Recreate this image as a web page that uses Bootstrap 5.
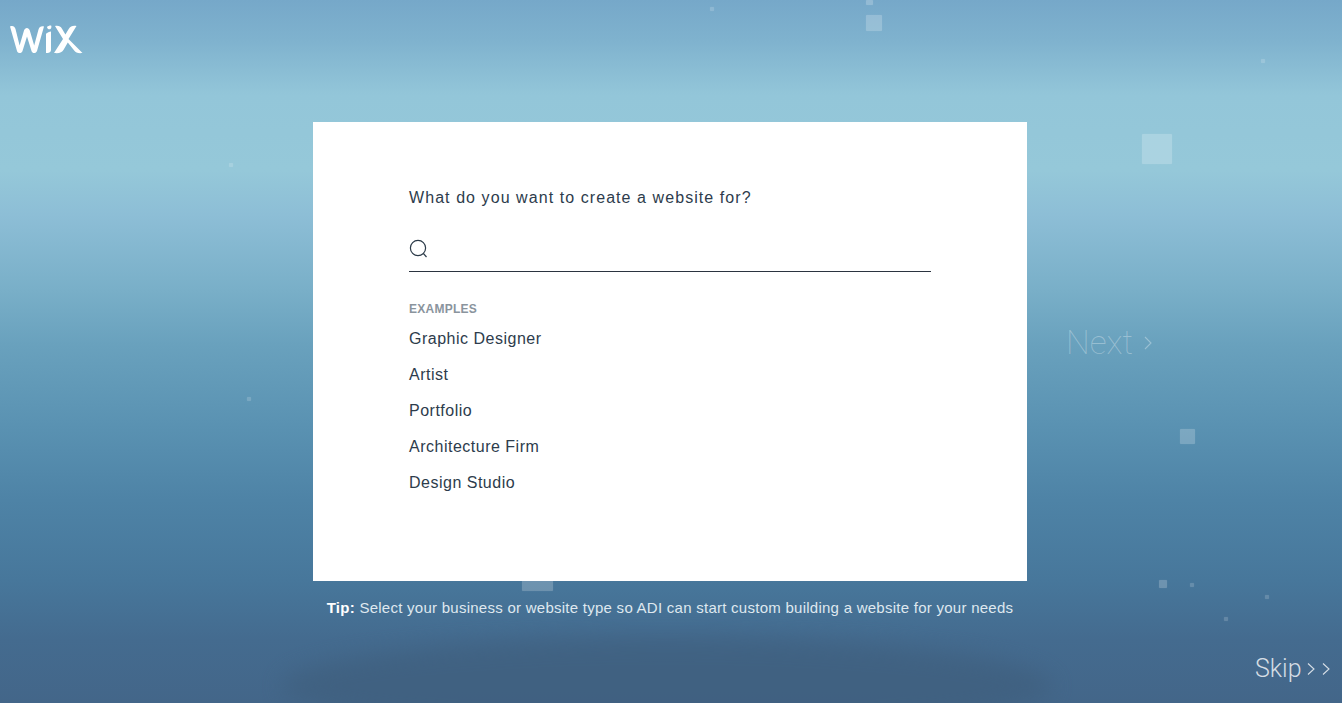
<!DOCTYPE html>
<html lang="en">
<head>
<meta charset="utf-8">
<title>ADI</title>
<link href="https://cdn.jsdelivr.net/npm/bootstrap@5.3.0/dist/css/bootstrap.min.css" rel="stylesheet">
<style>
html,body{height:100%}
body{margin:0;overflow:hidden;font-family:"Liberation Sans",Arial,sans-serif;background:linear-gradient(180deg,#76a8c9 0,#7fb2ce 40px,#93c6d9 95px,#95c8d9 170px,#8dbed6 215px,#79afc8 290px,#69a1bd 345px,#5a92b2 425px,#4e83a6 500px,#47779b 580px,#446b8f 640px,#436689 703px)}
.stage{position:relative;height:703px;overflow:hidden}
.glow{position:absolute;left:282px;top:638px;width:770px;height:96px;border-radius:50%;background:#3f5f7e;filter:blur(11px);opacity:.72}
.speck{position:absolute;background:rgba(255,255,255,.21);box-shadow:0 0 1px rgba(255,255,255,.2);border-radius:1px}
.speck.tiny{background:rgba(255,255,255,.17)}
.logo{position:absolute;left:10px;top:25px;display:block}
.panel{position:relative;width:714px;height:459px;margin:0 0 0 313px;top:122px;padding:66px 96px 0;background:#fff;color:#2d3c4c}
.quiz{font-size:16px;line-height:20px;letter-spacing:1.07px;margin:0}
.searchline{height:41px;margin-top:23px;border-bottom:1px solid #2b3440;width:522px;padding-top:8px}
.searchline svg{display:block}
.exhead{font-size:12px;line-height:14px;font-weight:700;color:#8a949d;margin:30px 0 0;letter-spacing:.25px}
.exlist{margin:5px 0 0;padding:0;list-style:none}
.exlist li{font-size:16px;line-height:36px;letter-spacing:.5px}
.tiptext{position:relative;top:122px;margin:17px 0 0;padding-right:2px;text-align:center;color:#dfe8ef;font-size:15px;line-height:20px;letter-spacing:.26px}
.tiptext b{color:#fff}
.nextlink{position:absolute;left:1066px;top:323px;display:flex;align-items:center;gap:11px;font-family:Roboto,"Liberation Sans",sans-serif;font-weight:100;font-size:33.500px;line-height:40px;color:rgba(255,255,255,.33)}
.skiplink{position:absolute;left:1255px;top:654px;display:flex;align-items:center;gap:5px;font-family:Roboto,"Liberation Sans",sans-serif;font-weight:300;font-size:25px;line-height:30px;color:rgba(255,255,255,.78)}
</style>
</head>
<body>
<div class="stage">
  <div class="glow"></div>
  <div class="speck" style="left:866px;top:15px;width:16px;height:16px"></div>
  <div class="speck" style="left:866px;top:0;width:7px;height:5px"></div>
  <div class="speck tiny" style="left:710px;top:7px;width:4px;height:4px"></div>
  <div class="speck tiny" style="left:1261px;top:59px;width:4px;height:4px"></div>
  <div class="speck" style="left:1142px;top:134px;width:30px;height:30px"></div>
  <div class="speck tiny" style="left:229px;top:163px;width:4px;height:4px"></div>
  <div class="speck tiny" style="left:247px;top:397px;width:4px;height:4px"></div>
  <div class="speck" style="left:1180px;top:429px;width:15px;height:15px"></div>
  <div class="speck" style="left:522px;top:570px;width:31px;height:21px"></div>
  <div class="speck" style="left:1159px;top:580px;width:8px;height:8px"></div>
  <div class="speck tiny" style="left:1190px;top:583px;width:4px;height:4px"></div>
  <div class="speck tiny" style="left:1265px;top:595px;width:4px;height:4px"></div>
  <div class="speck tiny" style="left:1224px;top:617px;width:4px;height:4px"></div>

  <svg class="logo" width="73" height="29" viewBox="0 0 73 29" aria-label="Wix logo" role="img">
    <g fill="#fff">
      <path d="M0 1.500c2.600-1 4.600-.3 5.500 2.600L9.600 20.500 14 5.500C15 2 18.800 2 19.800 5.500L24.200 20.500 28.500 4.500C29.300 1.500 31.500 1 34 1.500L27 26c-.8 2.500-4.500 3-5.500 0L17 11.500 12.500 26c-1 3-4.700 2.600-5.500 0Z"/>
      <path d="M36 8.800c1.300-1.200 3.300-2 5-2.200V25c0 2.500-2.600 3-5 3Z"/>
      <path d="M37 1.900c1.300-1.100 3.300-1.700 4.300-1.200.4 1.500-.2 3-1.300 3.500-1.300.6-2.700-.8-3-2.300Z"/>
      <path d="M45 1c3.500-.5 5.400.1 7 2.800l3.400 5.700 3.300-5.500C60.500 1 63 .5 66.500 1L58.500 14l14 14c-3.800.5-6.800 0-8.700-3L57.800 17.500l-4.200 7.300C52 27.800 49 28.500 44 28L53 14Z"/>
    </g>
  </svg>

  <main class="panel">
    <p class="quiz">What do you want to create a website for?</p>
    <div class="searchline">
      <svg width="19" height="20" viewBox="0 0 19 20" fill="none" stroke="#2b3a48" stroke-width="1.2" aria-hidden="true">
        <circle cx="9" cy="9" r="7.600"/>
        <path d="M14.400 14.500 17.500 18"/>
      </svg>
    </div>
    <p class="exhead">EXAMPLES</p>
    <ul class="exlist">
      <li>Graphic Designer</li>
      <li>Artist</li>
      <li>Portfolio</li>
      <li>Architecture Firm</li>
      <li>Design Studio</li>
    </ul>
  </main>
  <p class="tiptext"><b>Tip:</b> Select your business or website type so ADI can start custom building a website for your needs</p>

  <div class="nextlink"><span>Next</span>
    <svg width="8" height="14" viewBox="0 0 8 14" fill="none" stroke="currentColor" stroke-width="1.100" aria-hidden="true"><path d="M1 1l6 6-6 6"/></svg>
  </div>
  <div class="skiplink"><span>Skip</span>
    <svg width="23" height="14" viewBox="0 0 23 14" fill="none" stroke="currentColor" stroke-width="1.100" aria-hidden="true"><path d="M1 1.500l6 5.500-6 5.500M16 1.500l6 5.500-6 5.500"/></svg>
  </div>
</div>
<script src="https://cdn.jsdelivr.net/npm/bootstrap@5.3.0/dist/js/bootstrap.bundle.min.js"></script>
</body>
</html>
